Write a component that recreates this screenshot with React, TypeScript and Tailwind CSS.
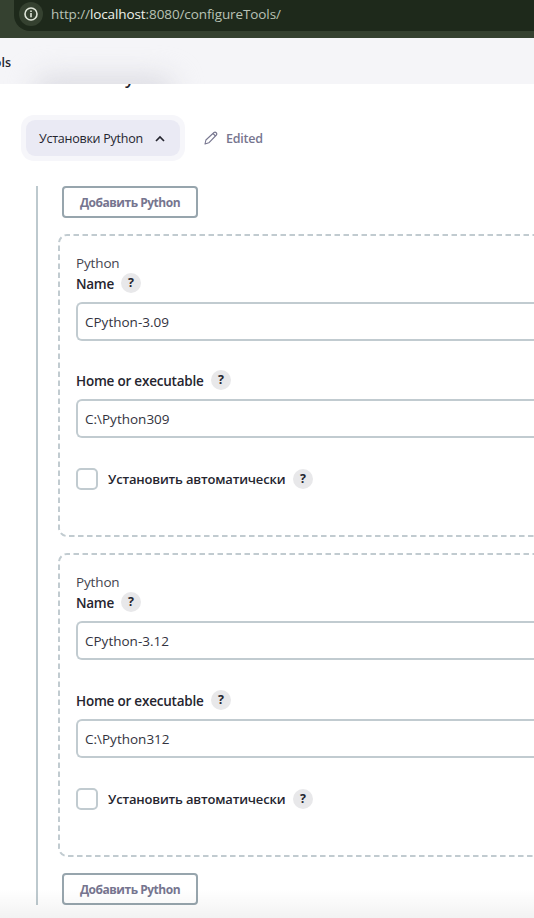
import React from "react";

function Help() {
  return (
    <span className="flex size-5 shrink-0 items-center justify-center rounded-full bg-[#e8e8ea] text-[12.5px] leading-5 font-bold text-[#25252f]">
      ?
    </span>
  );
}

function AddButton() {
  return (
    <button className="flex h-8 w-[136px] shrink-0 items-center justify-center rounded-[4px] border-2 border-[#97a5ad] bg-white pt-[2px] text-[12px] font-bold whitespace-nowrap text-[#76758f]">
      <span className="tracking-[-0.48px]">Добавить Python</span>
    </button>
  );
}

function Field({ label, value, wide }: { label: string; value: string; wide?: boolean }) {
  return (
    <div>
      <div className="flex h-5 items-center">
        <span className={wide ? "mt-[2px] mr-[7px] w-32 text-[13.5px] font-semibold tracking-[-0.22px] whitespace-nowrap" : "mt-[2px] mr-[7px] w-[38px] text-[13.5px] font-semibold tracking-[-0.3px] whitespace-nowrap"}>
          {label}
        </span>
        <Help />
      </div>
      <div className="mt-[9px] flex h-[39px] items-center rounded-l-[6px] border-2 border-r-0 border-[#c1cbd0] bg-white pl-[7px] text-[13.5px] text-[#333340]">
        {value}
      </div>
    </div>
  );
}

function Installation({ name, home, last }: { name: string; home: string; last?: boolean }) {
  return (
    <section className={last ? "relative h-[304px] w-[476px] pt-[19px] pl-[18px] text-[13.5px] leading-5 text-[#25252f]" : "relative h-[303px] w-[476px] pt-[19px] pl-[18px] text-[13.5px] leading-5 text-[#25252f]"}>
      <svg className="pointer-events-none absolute inset-0" width="476" height={last ? 304 : 303} fill="none" stroke="#c1cbd0" strokeWidth="2">
        <path d={`M480 1H9a8 8 0 0 0-8 8v${last ? 286 : 285}a8 8 0 0 0 8 8h471`} strokeDasharray="5.5 3.5" />
      </svg>
      <div className="h-5 tracking-[-0.15px] text-[#44444f]">Python</div>
      <Field label="Name" value={name} />
      <div className={last ? "mt-[30px]" : "mt-[29px]"}>
        <Field label="Home or executable" value={home} wide />
      </div>
      <div className="mt-[30px] flex h-[22px] items-center">
        <span className="size-[22px] rounded-[5px] border-2 border-[#c1cbd0] bg-white" />
        <span className="mr-2 ml-[10px] w-[177px] text-[13px] font-semibold tracking-[-0.17px] whitespace-nowrap">Установить автоматически</span>
        <Help />
      </div>
    </section>
  );
}

export default function App() {
  return (
    <div className="flex h-[918px] w-[534px] flex-col overflow-hidden bg-white font-['Open_Sans','Noto_Sans',sans-serif]">
      <header className="h-[38px] shrink-0 bg-[#354130] pl-[14px]">
        <div className="flex h-[31px] items-center rounded-bl-[16px] bg-[#1e291b] pb-[3px] pl-[5px]">
          <span className="flex size-6 items-center justify-center rounded-full bg-[#354130]">
            <svg width="14" height="14" viewBox="0 0 14 14" fill="none" stroke="#e0e6da" strokeWidth="1.6">
              <circle cx="7" cy="7" r="6" />
              <path d="M7 6v4.2M7 3.5v1.6" />
            </svg>
          </span>
          <span className="ml-2 text-[13.5px] tracking-[-0.1px] whitespace-nowrap text-[#b9c2b5]">
            http://<span className="text-[#eef2ea]">localhost</span>:8080/configureTools/
          </span>
        </div>
      </header>
      <nav className="relative flex h-[46px] shrink-0 items-center overflow-hidden bg-[#f5f5f8] text-[12.5px] font-semibold text-[#25252f]">
        <div className="absolute top-[40px] left-[34px] h-[26px] w-[140px] rounded-full bg-[#d8d8df] blur-[14px]" />
        <span className="relative mt-[4px] flex w-[11px] justify-end overflow-hidden whitespace-nowrap">Tools</span>
      </nav>
      <div className="flex h-[31px] shrink-0 items-start overflow-hidden pl-[87px] text-[17px] leading-5 font-semibold text-[#25252f]">
        <span className="-mt-[16px] ml-[38px]">y</span>
      </div>
      <div className="flex h-[46px] shrink-0 items-center pl-[21px] text-[12.5px] font-semibold">
        <div className="rounded-[13px] bg-[#f6f6fa] p-[5px]">
          <div className="flex h-9 w-[154px] items-center rounded-[9px] bg-[#eaeaf4] pl-[13px] text-[#25252f]">
            <span className="mt-[2px] w-[107px] font-medium tracking-[-0.25px] whitespace-nowrap">Установки Python</span>
            <svg className="ml-[9px]" width="10" height="7" fill="none" stroke="currentColor" strokeWidth="1.7">
              <path d="m1 6 4-4 4 4" />
            </svg>
          </div>
        </div>
        <svg className="ml-[19px] text-[#77768f]" width="14" height="15" fill="none" stroke="currentColor" strokeWidth="1.1" strokeLinejoin="round">
          <path d="m1 13 .9-4L10 1.5c1.5-1.1 3.6.9 2.4 2.5L4.8 11.8 1 13ZM9 2.5l2.5 2.5" />
        </svg>
        <span className="mt-[2px] ml-2 tracking-[-0.25px] text-[#77768f]">Edited</span>
      </div>
      <main className="mt-[25px] ml-9 flex h-[719px] shrink-0 flex-col border-l-2 border-[#bdc9ce] pl-5">
        <div className="pl-1"><AddButton /></div>
        <div className="mt-4 flex flex-col gap-4">
          <Installation name="CPython-3.09" home="C:\Python309" />
          <Installation name="CPython-3.12" home="C:\Python312" last />
        </div>
        <div className="mt-4 pl-1"><AddButton /></div>
      </main>
      <div className="-mt-4 h-[29px] shrink-0 bg-linear-to-b from-transparent to-black/5" />
    </div>
  );
}
